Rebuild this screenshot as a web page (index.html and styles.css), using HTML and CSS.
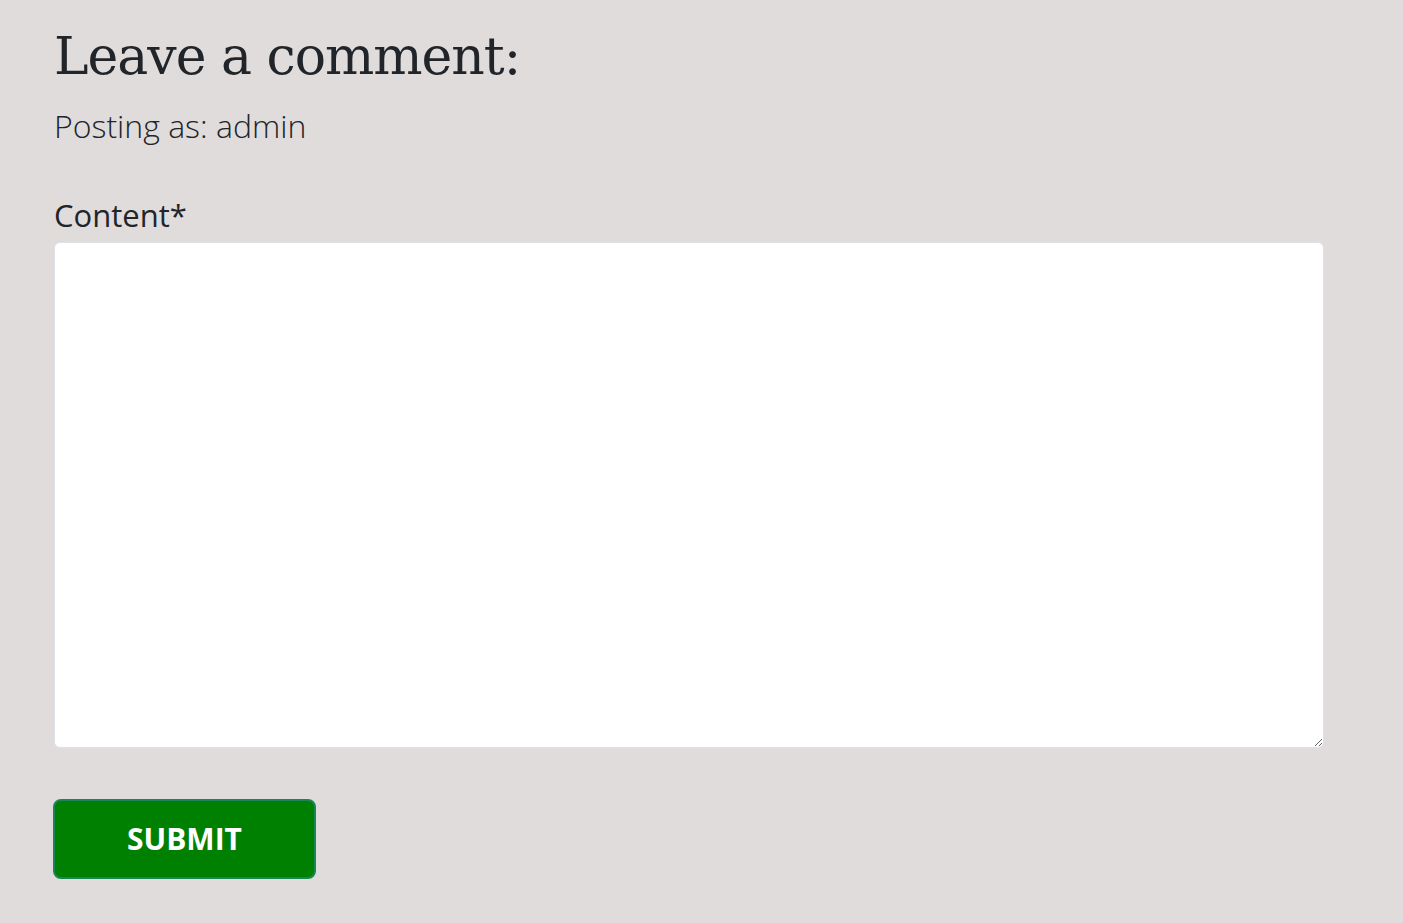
FILE: index.html
```html
<!DOCTYPE html>
<html lang="en">
<head>
<meta charset="utf-8">
<title>Leave a comment</title>
<link rel="stylesheet" href="styles.css">
</head>
<body>
<main class="comment-section">
  <h2 class="comment-title">Leave a comment:</h2>
  <p class="posting-as">Posting as: admin</p>
  <form class="comment-form">
    <label class="field-label" for="content">Content*</label>
    <textarea id="content" class="field-textarea"></textarea>
    <button type="submit" class="submit-btn">SUBMIT</button>
  </form>
</main>
</body>
</html>
```

FILE: styles.css
```css
html, body {
  margin: 0;
  padding: 0;
}
body {
  background: #e0dcdb;
  color: #212529;
  font-family: "Open Sans", "Liberation Sans", sans-serif;
}
.comment-section {
  padding: 25px 80px 0 54px;
  display: flex;
  flex-direction: column;
}
.comment-title {
  font-family: "DejaVu Serif", "Liberation Serif", serif;
  font-weight: 400;
  font-size: 52px;
  line-height: 1.2;
  margin: 0;
  letter-spacing: -1px;
}
.posting-as {
  font-weight: 300;
  font-size: 32px;
  margin: 20px 0 0;
  line-height: 1.2;
}
.comment-form {
  display: flex;
  flex-direction: column;
  align-items: flex-start;
  margin-top: 51px;
}
.field-label {
  font-size: 31px;
  line-height: 1.2;
  margin-bottom: 8px;
}
.field-textarea {
  box-sizing: border-box;
  width: 1270px;
  height: 506px;
  background: #fff;
  border: 1px solid #dee2e6;
  border-radius: 6px;
  margin: 0;
  padding: 8px 12px;
  font: inherit;
}
.submit-btn {
  margin-top: 51px;
  margin-left: -1px;
  box-sizing: border-box;
  width: 263px;
  height: 80px;
  background: #008000;
  color: #fff;
  border: 2px solid #198754;
  border-radius: 8px;
  font-family: "Open Sans", "Liberation Sans", sans-serif;
  font-weight: 700;
  font-size: 30px;
  cursor: pointer;
}
```
